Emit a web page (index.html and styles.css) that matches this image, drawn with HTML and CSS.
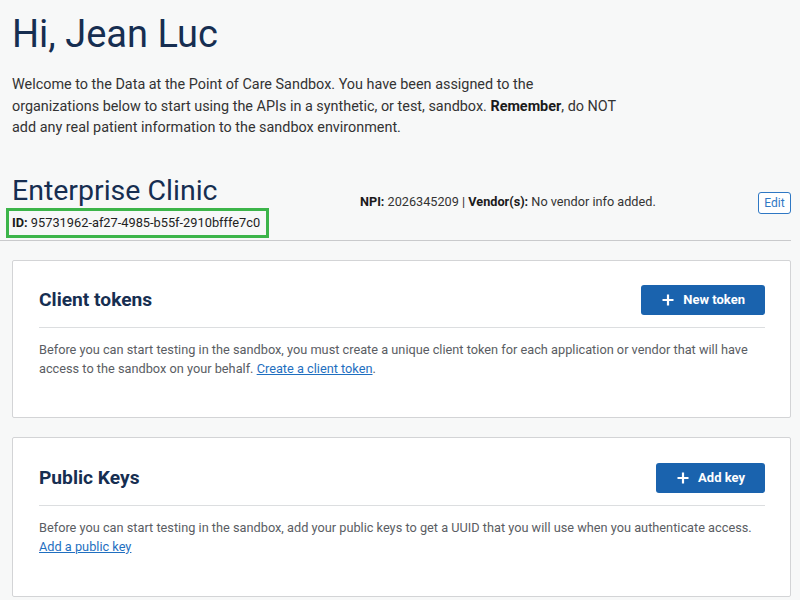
FILE: index.html
```html
<!DOCTYPE html>
<html lang="en">
<head>
<meta charset="utf-8">
<title>Sandbox</title>
<link rel="stylesheet" href="styles.css">
</head>
<body>
<main class="page">
  <h1 class="greeting">Hi, Jean Luc</h1>
  <p class="intro">Welcome to the Data at the Point of Care Sandbox. You have been assigned to the organizations below to start using the APIs in a synthetic, or test, sandbox. <strong>Remember</strong>, do NOT add any real patient information to the sandbox environment.</p>

  <section class="org-header">
    <div class="org-name">
      <h2 class="org-title">Enterprise Clinic</h2>
      <div class="org-id"><strong>ID:</strong> 95731962-af27-4985-b55f-2910bfffe7c0</div>
    </div>
    <div class="org-meta"><strong>NPI:</strong> 2026345209 | <strong>Vendor(s):</strong> No vendor info added.</div>
    <button class="btn-edit" type="button">Edit</button>
  </section>

  <section class="card card-tokens">
    <div class="card-head">
      <h3 class="card-title">Client tokens</h3>
      <button class="btn-primary" type="button">
        <svg class="plus" width="12" height="12" viewBox="0 0 12 12"><path d="M6 0.5v11M0.5 6h11" stroke="#fff" stroke-width="2.2"/></svg>
        <span>New token</span>
      </button>
    </div>
    <p class="card-text">Before you can start testing in the sandbox, you must create a unique client token for each application or vendor that will have access to the sandbox on your behalf. <a href="#">Create a client token</a>.</p>
  </section>

  <section class="card card-keys">
    <div class="card-head">
      <h3 class="card-title">Public Keys</h3>
      <button class="btn-primary" type="button">
        <svg class="plus" width="12" height="12" viewBox="0 0 12 12"><path d="M6 0.5v11M0.5 6h11" stroke="#fff" stroke-width="2.2"/></svg>
        <span>Add key</span>
      </button>
    </div>
    <p class="card-text">Before you can start testing in the sandbox, add your public keys to get a UUID that you will use when you authenticate access.<br><a href="#">Add a public key</a></p>
  </section>
</main>
</body>
</html>
```

FILE: styles.css
```css
* { box-sizing: border-box; }
html, body {
  margin: 0;
  background: #f7f8f8;
  font-family: Roboto, "Liberation Sans", Arial, sans-serif;
  color: #333;
}
.page {
  padding: 11px 9px 0 12px;
}
.greeting {
  margin: 0;
  font-size: 38px;
  line-height: 46px;
  font-weight: 400;
  color: #162e51;
}
.intro {
  margin: 17px 0 0 0;
  width: 606px;
  font-size: 14.4px;
  line-height: 21.5px;
  color: #333;
}
.intro strong { color: #1b1b1b; }

.org-header {
  display: flex;
  align-items: flex-start;
  margin: 35px 0 0 -12px;
  padding: 0 0 8px 12px;
  border-bottom: 1px solid #c9cacc;
}
.org-name {
  width: 348px;
  flex: none;
}
.org-title {
  margin: 0;
  font-size: 28.5px;
  line-height: 34px;
  font-weight: 400;
  color: #162e51;
}
.org-id {
  display: inline-block;
  margin-top: 6px;
  padding-right: 3px;
  font-size: 12.8px;
  line-height: 18px;
  white-space: nowrap;
  color: #222;
  outline: 3px solid #3cb54a;
  outline-offset: 3px;
}
.org-id strong, .org-meta strong { color: #1b1b1b; }
.org-meta {
  margin-top: 19px;
  font-size: 12.7px;
  line-height: 18px;
  color: #333;
  flex: 1;
}
.btn-edit {
  margin-top: 18px;
  width: 33px;
  height: 22px;
  padding: 0;
  border: 1px solid #2f78c4;
  border-radius: 3px;
  background: #fff;
  color: #2f78c4;
  font-family: Roboto, "Liberation Sans", Arial, sans-serif;
  font-size: 12px;
}

.card {
  background: #fff;
  border: 1px solid #d3d4d6;
  border-radius: 2px;
  padding: 24px 25px 0 26px;
}
.card-tokens { margin-top: 19px; height: 158px; }
.card-keys { margin-top: 19px; height: 160px; padding-top: 25px; }
.card-head {
  display: flex;
  align-items: center;
  justify-content: space-between;
  padding-bottom: 12px;
  border-bottom: 1px solid #dcdee0;
}
.card-title {
  margin: 0;
  font-size: 19.2px;
  font-weight: 700;
  color: #162e51;
}
.btn-primary {
  display: flex;
  align-items: center;
  gap: 9px;
  height: 30px;
  padding: 0 20px 0 21px;
  border: none;
  border-radius: 3px;
  background: #1a63ae;
  color: #fff;
  font-family: Roboto, "Liberation Sans", Arial, sans-serif;
  font-size: 13px;
  font-weight: 700;
}
.card-text {
  margin: 12px 0 0 0;
  font-size: 12.75px;
  line-height: 19.5px;
  color: #5a5d63;
}
.card-text a { color: #1f6fc0; }
```
